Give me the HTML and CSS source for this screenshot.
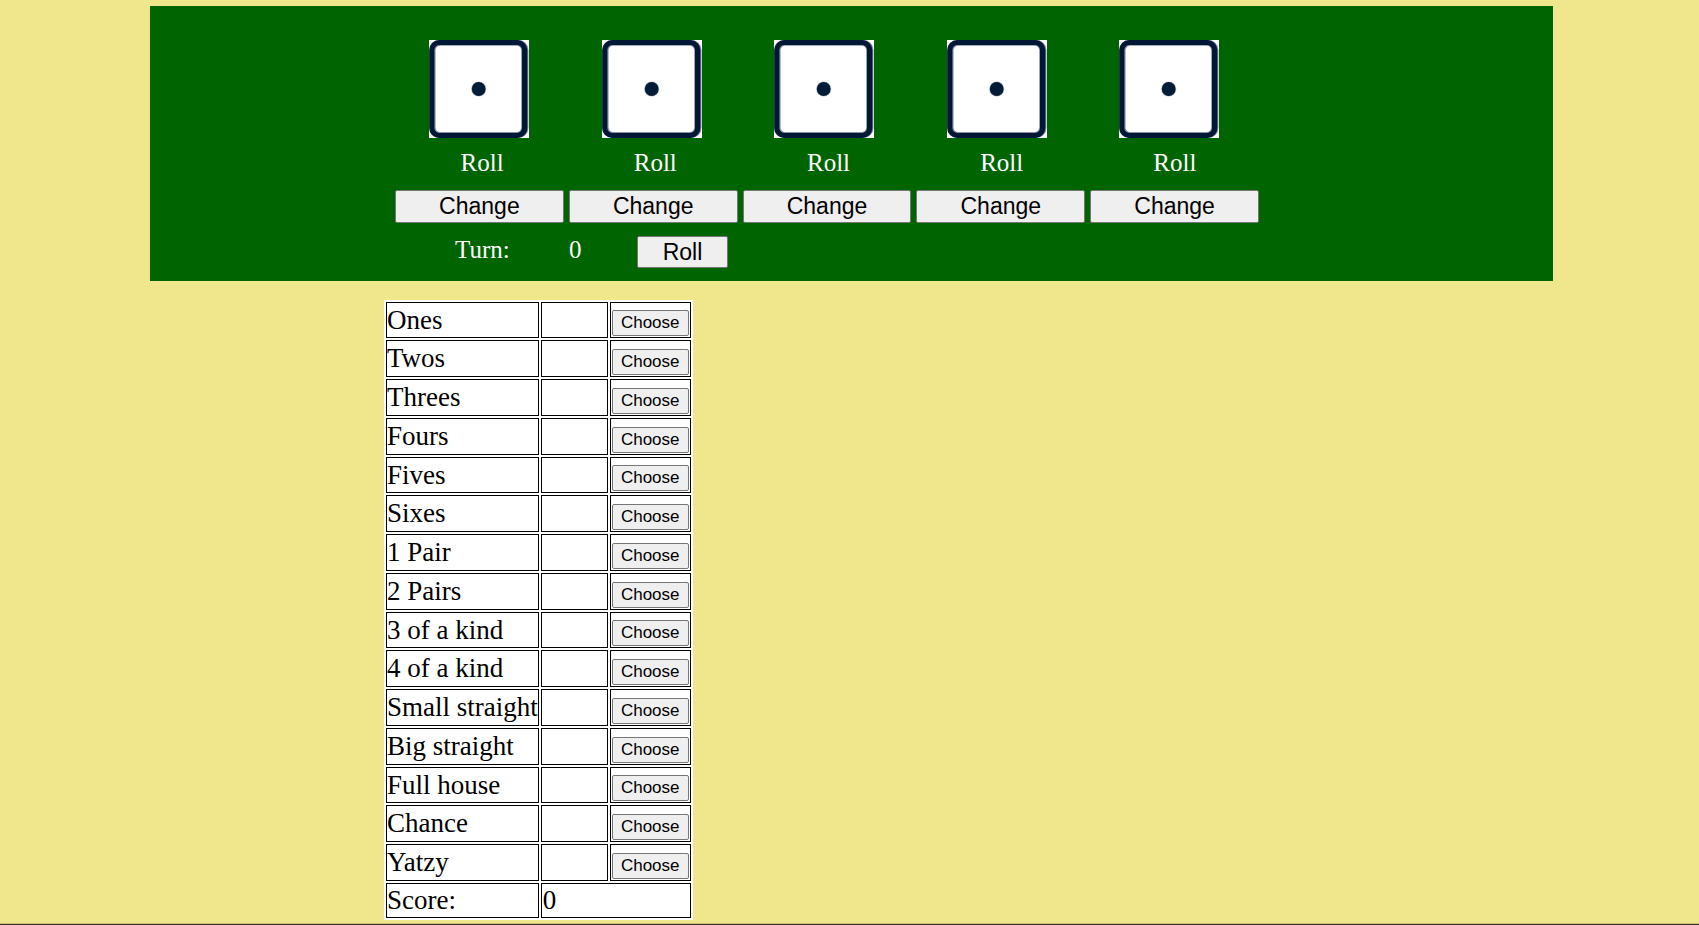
FILE: index.html
```
<!DOCTYPE html>
<html lang="en">
<head>
<meta charset="utf-8">
<title>Yatzy</title>
<link rel="stylesheet" href="styles.css">
</head>
<body>
<svg class="sprite" aria-hidden="true">
  <symbol id="die-one" viewBox="0 0 100 98">
    <rect width="100" height="98" fill="#fff"/>
    <rect x="0" y="0" width="99.4" height="98" rx="10" fill="#747a90"/>
    <rect x="0.3" y="0" width="98" height="98" rx="10" fill="#001736"/>
    <rect x="5.4" y="5" width="87.6" height="88" rx="5" fill="#8b90a2"/>
    <rect x="6.6" y="5.8" width="85.6" height="86.2" rx="4.5" fill="#fff"/>
    <circle cx="49.7" cy="49" r="7.6" fill="#b8bcc6"/>
    <circle cx="49.7" cy="49" r="6.9" fill="#001c36"/>
  </symbol>
</svg>
<div class="page">
  <main>
    <section class="board">
      <div class="dice">
        <svg class="die" role="img" aria-label="One"><use href="#die-one"/></svg>
        <svg class="die" role="img" aria-label="One"><use href="#die-one"/></svg>
        <svg class="die" role="img" aria-label="One"><use href="#die-one"/></svg>
        <svg class="die" role="img" aria-label="One"><use href="#die-one"/></svg>
        <svg class="die" role="img" aria-label="One"><use href="#die-one"/></svg>
      </div>
      <div class="grid states">
        <span>Roll</span><span>Roll</span><span>Roll</span><span>Roll</span><span>Roll</span>
      </div>
      <div class="grid changes">
        <button type="button">Change</button>
        <button type="button">Change</button>
        <button type="button">Change</button>
        <button type="button">Change</button>
        <button type="button">Change</button>
      </div>
      <div class="turn">
        <span class="turn-label">Turn:</span>
        <span class="turn-count">0</span>
        <button type="button" class="roll">Roll</button>
      </div>
    </section>
    <table class="scores">
      <tbody>
        <tr><td>Ones</td><td class="points"></td><td><button type="button">Choose</button></td></tr>
        <tr><td>Twos</td><td></td><td><button type="button">Choose</button></td></tr>
        <tr><td>Threes</td><td></td><td><button type="button">Choose</button></td></tr>
        <tr><td>Fours</td><td></td><td><button type="button">Choose</button></td></tr>
        <tr><td>Fives</td><td></td><td><button type="button">Choose</button></td></tr>
        <tr><td>Sixes</td><td></td><td><button type="button">Choose</button></td></tr>
        <tr><td>1 Pair</td><td></td><td><button type="button">Choose</button></td></tr>
        <tr><td>2 Pairs</td><td></td><td><button type="button">Choose</button></td></tr>
        <tr><td>3 of a kind</td><td></td><td><button type="button">Choose</button></td></tr>
        <tr><td>4 of a kind</td><td></td><td><button type="button">Choose</button></td></tr>
        <tr><td>Small straight</td><td></td><td><button type="button">Choose</button></td></tr>
        <tr><td>Big straight</td><td></td><td><button type="button">Choose</button></td></tr>
        <tr><td>Full house</td><td></td><td><button type="button">Choose</button></td></tr>
        <tr><td>Chance</td><td></td><td><button type="button">Choose</button></td></tr>
        <tr><td>Yatzy</td><td></td><td><button type="button">Choose</button></td></tr>
        <tr class="total"><td>Score:</td><td colspan="2">0</td></tr>
      </tbody>
    </table>
  </main>
</div>
</body>
</html>
```
FILE: styles.css
```
* {
  box-sizing: border-box;
}

body {
  margin: 0;
  background: #f0e68c;
  font-family: "Liberation Serif", "Times New Roman", serif;
}

.sprite {
  position: absolute;
  width: 0;
  height: 0;
}

.page {
  display: flex;
  flex-direction: column;
  min-height: 100vh;
  border-bottom: 1px solid #333;
}

.page::after {
  content: "";
  margin-top: auto;
  height: 1px;
  background: #c8c078;
}

.board {
  margin: 6px 146px 0 150px;
  padding: 34px 0 13px 245px;
  background: #006400;
  color: #fff;
  font-size: 25px;
  line-height: 28px;
}

.dice {
  display: flex;
  justify-content: space-between;
  width: 790px;
  margin-left: 34px;
}

.die {
  display: block;
  width: 100px;
  height: 98px;
}

.grid {
  display: grid;
  grid-template-columns: repeat(5, 1fr);
  gap: 5px;
  width: 864px;
  text-align: center;
}

.states {
  padding-left: 3px;
  margin: 11px 0 13px;
}

button {
  border: 1px solid #767676;
  border-radius: 2px;
  padding: 0;
  background: #efefef;
  color: #000;
  font-family: "Liberation Sans", Arial, sans-serif;
}

.changes button {
  height: 33px;
  font-size: 23px;
}

.turn {
  display: flex;
  margin-top: 13px;
  padding-left: 60px;
}

.turn-label {
  width: 114px;
}

.turn-count {
  width: 68px;
}

.roll {
  width: 91px;
  height: 32px;
  font-size: 23px;
}

.scores {
  margin: 19px 0 3px 384px;
  border-spacing: 2px;
  background: #fff;
  color: #000;
  font-size: 27px;
  line-height: 32px;
}

.scores td {
  height: 37px;
  padding: 1px 0 1px 1px;
  border: 1px solid #000;
  vertical-align: top;
  white-space: nowrap;
}

.scores tr:nth-child(4n + 1) td {
  height: 36px;
}

.scores td:first-child {
  padding-left: 0;
}

.scores .points {
  width: 67px;
}

.scores td:nth-child(3) {
  width: 81px;
  padding-right: 1px;
  vertical-align: bottom;
}

.scores button {
  display: block;
  width: 77px;
  height: 26px;
  font-size: 17px;
}

.scores .total td {
  height: 35px;
  line-height: 30px;
}
```
